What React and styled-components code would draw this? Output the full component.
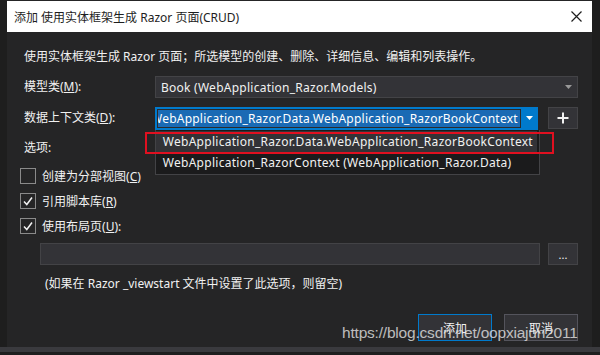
import styled, { createGlobalStyle } from "styled-components"

const GlobalStyle = createGlobalStyle`
body {
  margin: 0;
  background: #1e1e1e;
  font-family: "Noto Sans", "Noto Sans CJK SC", sans-serif;
}
`

function Caret() {
  return (
    <svg width="7" height="4" viewBox="0 0 7 4">
      <polygon points="0,0 7,0 3.5,4" fill="currentColor" />
    </svg>
  )
}

function Check() {
  return (
    <svg width="12" height="12" viewBox="0 0 12 12">
      <polyline points="2,6.5 4.8,9.5 10,2.5" fill="none" stroke="#f1f1f1" strokeWidth="1.5" />
    </svg>
  )
}

const options = [
  { label: "创建为分部视图", key: "C", checked: false },
  { label: "引用脚本库", key: "R", checked: true },
  { label: "使用布局页", key: "U", checked: true, colon: true },
]

function App() {
  return (
    <Page>
      <GlobalStyle />
      <Dialog>
        <TitleBar>
          <span>添加 使用实体框架生成 Razor 页面(CRUD)</span>
          <svg width="11" height="11" viewBox="0 0 11 11">
            <path d="M0.5 0.5 L10.5 10.5 M10.5 0.5 L0.5 10.5" stroke="#1e1e1e" strokeWidth="1.2" />
          </svg>
        </TitleBar>

        <Body>
          <Text>使用实体框架生成 Razor 页面；所选模型的创建、删除、详细信息、编辑和列表操作。</Text>

          <FormRow $top={11}>
            <Label>模型类(<u>M</u>):</Label>
            <Combo>
              <span>Book (WebApplication_Razor.Models)</span>
              <Caret />
            </Combo>
          </FormRow>

          <FormRow $top={9}>
            <Label>数据上下文类(<u>D</u>):</Label>
            <ComboWrap>
              <BlueCombo>
                <Selected>
                  <span>WebApplication_Razor.Data.WebApplication_RazorBookContext</span>
                </Selected>
                <ArrowPart>
                  <Caret />
                </ArrowPart>
              </BlueCombo>
              <DropList>
                <Item $active>WebApplication_Razor.Data.WebApplication_RazorBookContext</Item>
                <Item>WebApplication_RazorContext (WebApplication_Razor.Data)</Item>
                <RedMark />
              </DropList>
            </ComboWrap>
            <SmallButton>
              <svg width="12" height="12" viewBox="0 0 12 12">
                <path d="M6 0.5 V11.5 M0.5 6 H11.5" stroke="#f1f1f1" strokeWidth="2" />
              </svg>
            </SmallButton>
          </FormRow>

          <Text $top={11}>选项:</Text>

          <Options>
            {options.map((o) => (
              <CheckRow key={o.key}>
                <Box>{o.checked && <Check />}</Box>
                <span>
                  {o.label}(<u>{o.key}</u>){o.colon ? ":" : ""}
                </span>
              </CheckRow>
            ))}
          </Options>

          <LayoutRow>
            <Input />
            <SmallButton>...</SmallButton>
          </LayoutRow>

          <Note>(如果在 Razor _viewstart 文件中设置了此选项，则留空)</Note>

          <Buttons>
            <Button $primary>添加</Button>
            <Button>取消</Button>
          </Buttons>
        </Body>
      </Dialog>
      <BottomStrip />
      <Watermark>https://blog.csdn.net/oopxiajun2011</Watermark>
    </Page>
  )
}

export default App

const Page = styled.div`
position: relative;
width: 600px;
height: 355px;
overflow: hidden;
background: #1e1e1e;
font-size: 12px;
color: #f1f1f1;
`

const Dialog = styled.div`
margin-left: 7px;
width: 585px;
height: 347px;
background: #252526;
display: flex;
flex-direction: column;
`

const TitleBar = styled.div`
height: 31px;
margin-top: 1px;
background: #ffffff;
color: #1e1e1e;
display: flex;
align-items: center;
justify-content: space-between;
padding: 0 10px 0 7px;
box-sizing: border-box;
`

const Body = styled.div`
padding: 17px 14px 0 17px;
display: flex;
flex-direction: column;
`

const Text = styled.div`
line-height: 16px;
margin-top: ${(p) => p.$top || 0}px;
`

const FormRow = styled.div`
display: flex;
align-items: center;
gap: 10px;
margin-top: ${(p) => p.$top}px;
height: 22px;
`

const Label = styled.div`
width: 121px;
line-height: 16px;
`

const Combo = styled.div`
flex: 1;
height: 22px;
box-sizing: border-box;
background: #333337;
border: 1px solid #434346;
display: flex;
align-items: center;
justify-content: space-between;
padding: 0 5px 0 5px;
color: #999999;

span {
  color: #f1f1f1;
  letter-spacing: 0.25px;
}
`

const ComboWrap = styled.div`
position: relative;
width: 384px;
height: 23px;
`

const BlueCombo = styled.div`
height: 23px;
background: #007acc;
display: flex;
align-items: center;
padding: 0 0 0 2px;
box-sizing: border-box;
`

const Selected = styled.div`
width: 364px;
height: 19px;
box-sizing: border-box;
border: 1px solid #2b2b2b;
background: #1a6ab4;
overflow: hidden;
display: flex;
justify-content: flex-end;
align-items: center;
padding-right: 2px;
white-space: nowrap;
color: #ffffff;
letter-spacing: 0.22px;
`

const ArrowPart = styled.div`
flex: 1;
display: flex;
justify-content: center;
color: #ffffff;
`

const DropList = styled.div`
position: absolute;
top: 23px;
left: 0;
width: 385px;
box-sizing: border-box;
background: #1b1b1c;
border: 1px solid #434346;
border-top: none;
padding: 1px 0 1px 0;
z-index: 2;
`

const Item = styled.div`
height: 21px;
line-height: 21px;
padding-left: 7px;
margin-right: 2px;
background: ${(p) => (p.$active ? "#333337" : "transparent")};
white-space: nowrap;
letter-spacing: 0.28px;
`

const RedMark = styled.div`
position: absolute;
left: -11px;
top: 2px;
width: 409px;
height: 22px;
border: 2px solid #e01020;
box-sizing: border-box;
`

const SmallButton = styled.div`
width: 30px;
height: 22px;
box-sizing: border-box;
background: #333337;
border: 1px solid #434346;
display: flex;
align-items: center;
justify-content: center;
line-height: 1;
font-size: 11px;
`

const Options = styled.div`
display: flex;
flex-direction: column;
gap: 9px;
margin-top: 12px;
margin-left: -4px;
`

const CheckRow = styled.div`
display: flex;
align-items: center;
gap: 6px;
height: 16px;
`

const Box = styled.div`
width: 16px;
height: 16px;
box-sizing: border-box;
border: 1px solid #8a8a8a;
background: #252526;
display: flex;
align-items: center;
justify-content: center;
`

const LayoutRow = styled.div`
display: flex;
gap: 8px;
margin-top: 9px;
padding-left: 16px;
height: 22px;
`

const Input = styled.div`
flex: 1;
box-sizing: border-box;
background: #333337;
border: 1px solid #434346;
`

const Note = styled.div`
line-height: 16px;
margin-top: 11px;
padding-left: 21px;
`

const Buttons = styled.div`
display: flex;
justify-content: flex-end;
gap: 12px;
margin-top: 22px;
`

const Button = styled.div`
width: 74px;
height: 27px;
box-sizing: border-box;
background: #333337;
border: 1px solid ${(p) => (p.$primary ? "#007acc" : "#54545c")};
display: flex;
align-items: center;
justify-content: center;
`

const BottomStrip = styled.div`
height: 5px;
background: #3a3a3e;
`

const Watermark = styled.div`
position: absolute;
left: 342px;
top: 324px;
font-family: "Liberation Sans", Arial, sans-serif;
font-size: 15.5px;
letter-spacing: -0.2px;
color: rgba(225, 225, 225, 0.82);
white-space: nowrap;
`
